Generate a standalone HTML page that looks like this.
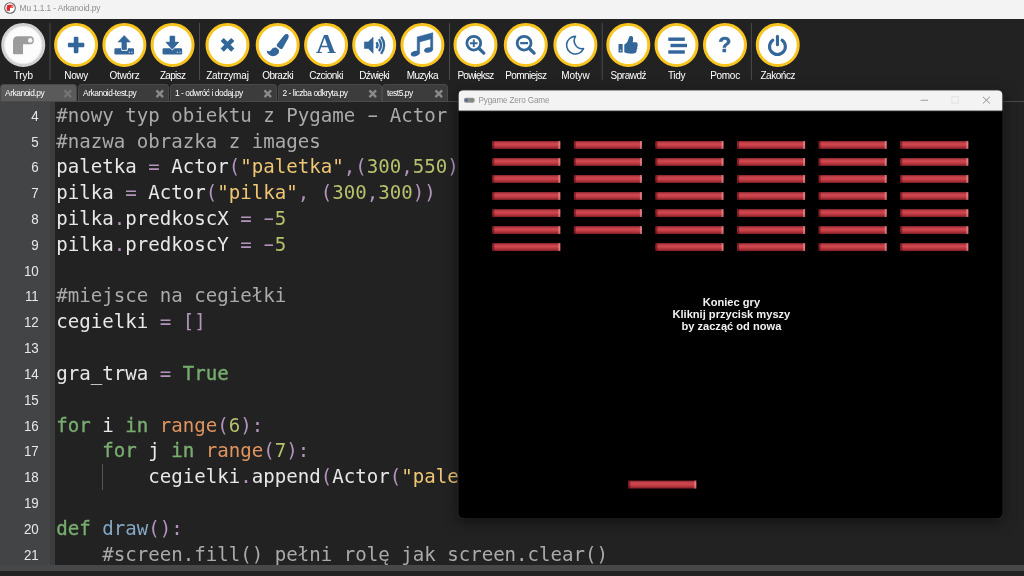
<!DOCTYPE html>
<html lang="pl">
<head>
<meta charset="utf-8">
<title>Mu 1.1.1 - Arkanoid.py</title>
<style>
*{margin:0;padding:0;box-sizing:border-box}
html,body{width:1024px;height:576px;overflow:hidden;background:#222;font-family:"Liberation Sans",sans-serif}
#app{position:relative;width:1024px;height:576px;overflow:hidden;background:#222;will-change:transform}
/* ---------- OS title bar ---------- */
#titlebar{position:absolute;left:0;top:0;width:1024px;height:19px;background:#f3f3f3}
#titlebar .ico{position:absolute;left:4px;top:1.8px;width:12px;height:12px}
#titlebar .ttl{position:absolute;left:19.6px;top:3.4px;font-size:8.3px;line-height:11px;color:#8c8c8c;white-space:nowrap;letter-spacing:-0.1px}
/* ---------- toolbar ---------- */
#toolbar{position:absolute;left:0;top:19px;width:1024px;height:65px;background:#222}
.sep{position:absolute;left:0;top:4px;width:1px;height:57px;background:#4a4a4a}
.btn{position:absolute;left:0;top:4px;width:44px;height:44px;margin-left:-22px;border-radius:50%;background:#fff;border:3px solid #fac41f}
.btn.mode{border-color:#d2d2d2;background:#fcfcfc;box-shadow:inset 0 0 0 1px #ececec}
.btn svg{position:absolute;left:-3px;top:-3px;width:44px;height:44px}
.lbl{position:absolute;top:50.5px;width:80px;margin-left:-40px;text-align:center;color:#fff;font-size:10px;line-height:12px;white-space:nowrap}
/* ---------- tabs ---------- */
#tabs{position:absolute;left:0;top:84px;width:1024px;height:18px;background:#222;border-bottom:1px solid #4a4a4a}
.tab{position:absolute;top:0;height:17px;background:#3c3c3c;border-radius:4px 4px 0 0;color:#fff;font-size:8.4px;line-height:17px;padding-left:4px;white-space:nowrap;letter-spacing:-0.45px;border:1px solid #4a4a4a;border-bottom:none}
.tab.act{background:#5a5a5a}
.tab.act .x path{stroke:#747474}
.tab .x{position:absolute;right:3.5px;top:3.5px;width:9.5px;height:9.5px}
/* ---------- editor ---------- */
#gutter{position:absolute;left:0;top:102px;width:56px;height:463px;background:linear-gradient(to right,#424446 50.5px,#3c3d3f 50.5px,#3c3d3f 55px,#222 55px);z-index:2}
#code{position:absolute;left:54px;top:102px;width:970px;height:463px;background:#222;overflow:hidden}
.ln{position:absolute;left:0;width:38.3px;text-align:right;color:#e8e8e8;font-size:15px;line-height:26px;height:26px;letter-spacing:-0.3px;transform:scaleX(0.89);transform-origin:100% 50%}
.cl{position:absolute;left:2.3px;white-space:pre;color:#e8e8e8;font-family:"DejaVu Sans Mono","Liberation Mono",monospace;font-size:19.1px;line-height:26px;height:26px}
.w{display:inline-block;transform:scaleX(1.75)}
.c{color:#a9aba9}.k{color:#78ad6f;-webkit-text-stroke:0.35px #78ad6f}.s{color:#f0c674}.n{color:#b8c06c}.o{color:#b294bc}.b{color:#e0955f}.f{color:#85a8c6}
#guide{position:absolute;left:48px;top:361px;width:1px;height:26px;background:#555}
#bottom1{position:absolute;left:0;top:565px;width:1024px;height:6px;background:#46484a}
#bottom2{position:absolute;left:0;top:571px;width:1024px;height:5px;background:#222}
/* ---------- pygame window ---------- */
#win{position:absolute;left:458px;top:90px;width:543.5px;height:427.6px;transform:translate(0.5px,0.15px);background:#000;border-radius:5px;overflow:hidden;box-shadow:0 3px 14px rgba(0,0,0,.5),0 0 0 1px rgba(64,64,64,.55)}
#wtitle{position:absolute;left:0;top:0;width:544px;height:20px;background:#f3f3f3;box-shadow:0 1px 0 rgba(243,243,243,.58)}
#wtitle .t{position:absolute;left:20px;top:4.8px;font-size:8.15px;line-height:12px;color:#939393;white-space:nowrap;letter-spacing:-0.15px}
#wtitle svg{position:absolute}
.brick{position:absolute;left:0;top:0;width:68.4px;height:7.6px;background:linear-gradient(to bottom,#84242a 0%,#c4424a 24%,#d0464e 45%,#b0333b 76%,#7a1d23 100%)}
.brick:before{content:"";position:absolute;left:0;top:0;width:2px;height:7.6px;background:rgba(90,10,14,.55)}
.brick:after{content:"";position:absolute;right:0;top:0;width:2px;height:7.6px;background:rgba(255,190,190,.45)}
#msg{position:absolute;left:132.9px;top:207.2px;width:280px;text-align:center;color:#f2f2f2;font-weight:bold;font-size:11.1px;line-height:11.8px}
</style>
</head>
<body>
<div id="app">

<div id="titlebar">
  <svg class="ico" viewBox="0 0 24 24"><circle cx="12" cy="12" r="10.6" fill="#fff" stroke="#666" stroke-width="2.2"/><path d="M5.5 17.5V10Q5.5 5.5 10 5.5H16.5Q19 5.5 19 8.5Q19 11.5 16.5 11.5H12V17.5Z" fill="#e0262c"/><circle cx="16.3" cy="8.4" r="1.3" fill="#fff"/></svg>
  <div class="ttl">Mu 1.1.1 - Arkanoid.py</div>
</div>

<div id="toolbar">
<div class="sep" style="transform:translateX(49.5px)"></div>
<div class="sep" style="transform:translateX(199.0px)"></div>
<div class="sep" style="transform:translateX(449.0px)"></div>
<div class="sep" style="transform:translateX(601.75px)"></div>
<div class="sep" style="transform:translateX(750.9px)"></div>
<div class="btn mode" style="transform:translateX(23.25px)"><svg viewBox="0 0 44 44"><path d="M11.8 30.2V18Q11.8 13.2 16.8 13.2H29Q32.6 13.2 32.6 17.2Q32.6 21.3 29 21.3H21.8V30.2Q21.8 31.2 20.8 31.2H12.8Q11.8 31.2 11.8 30.2Z" fill="#9c9c9c"/><circle cx="29" cy="17.4" r="2.3" fill="#f4f4f4"/></svg></div><div class="lbl" style="left:23.25px;letter-spacing:-0.10px"><span>Tryb</span></div>
<div class="btn" style="transform:translateX(76.1px)"><svg viewBox="0 0 44 44"><rect x="19.7" y="13.8" width="4.6" height="16.4" rx="1" fill="#336699"/><rect x="13.8" y="19.7" width="16.4" height="4.6" rx="1" fill="#336699"/></svg></div><div class="lbl" style="left:76.1px;letter-spacing:-0.34px"><span>Nowy</span></div>
<div class="btn" style="transform:translateX(124.4px)"><svg viewBox="0 0 44 44"><rect x="12" y="25.2" width="19.6" height="6.3" rx="1.2" fill="#336699"/><path d="M18.6 24.8H25.4V26.6Q25.4 28 24 28H20Q18.6 28 18.6 26.6Z" fill="#fff"/><path d="M21.8 12.4L28 19H24.1V26.3Q24.1 26.8 23.6 26.8H20Q19.5 26.8 19.5 26.3V19H15.6Z" fill="#336699" stroke="#336699" stroke-width="0.6" stroke-linejoin="round"/><circle cx="26.9" cy="29.3" r="0.75" fill="#b9cbe0"/><circle cx="29.5" cy="29.3" r="0.75" fill="#b9cbe0"/></svg></div><div class="lbl" style="left:124.4px;letter-spacing:-0.29px"><span>Otwórz</span></div>
<div class="btn" style="transform:translateX(172.55px)"><svg viewBox="0 0 44 44"><rect x="12" y="25.2" width="19.6" height="6.3" rx="1.2" fill="#336699"/><path d="M21.8 26.2L28.2 19.2H24.2V13.6Q24.2 13.1 23.7 13.1H19.9Q19.4 13.1 19.4 13.6V19.2H15.4Z" fill="#336699" stroke="#fff" stroke-width="2" stroke-linejoin="round" paint-order="stroke"/><path d="M21.8 26.2L28.2 19.2H24.2V13.6Q24.2 13.1 23.7 13.1H19.9Q19.4 13.1 19.4 13.6V19.2H15.4Z" fill="#336699" stroke="#336699" stroke-width="0.6" stroke-linejoin="round"/><circle cx="26.9" cy="29.3" r="0.75" fill="#b9cbe0"/><circle cx="29.5" cy="29.3" r="0.75" fill="#b9cbe0"/></svg></div><div class="lbl" style="left:172.55px;letter-spacing:-0.69px"><span>Zapisz</span></div>
<div class="btn" style="transform:translateX(227.5px)"><svg viewBox="0 0 44 44"><path d="M16.7 16.5L27.3 27.1M27.3 16.5L16.7 27.1" stroke="#336699" stroke-width="4.5" fill="none"/></svg></div><div class="lbl" style="left:227.5px;letter-spacing:-0.13px"><span>Zatrzymaj</span></div>
<div class="btn" style="transform:translateX(277.7px)"><svg viewBox="0 0 44 44"><path d="M31.7 11.1Q33.9 12.2 32.5 15.4L26.8 25.4Q25.8 26.6 24.4 25.8L21.6 23.5Q20.5 22.4 21.4 21L28.4 12.2Q30 10.4 31.7 11.1Z" fill="#336699"/><path d="M20.6 24.6Q17 24 15.6 26.8Q14.6 29.2 11 27.6Q11.4 31.4 15 32.8Q18.6 33.8 21.4 31.8Q23.8 29.8 23.4 27.2Z" fill="#336699"/></svg></div><div class="lbl" style="left:277.7px;letter-spacing:-0.49px"><span>Obrazki</span></div>
<div class="btn" style="transform:translateX(326.1px)"><svg viewBox="0 0 44 44"><text x="21.9" y="30.1" font-family="Liberation Serif,serif" font-weight="bold" font-size="27.5" text-anchor="middle" fill="#336699">A</text></svg></div><div class="lbl" style="left:326.1px;letter-spacing:-0.53px"><span>Czcionki</span></div>
<div class="btn" style="transform:translateX(374.2px)"><svg viewBox="0 0 44 44"><path d="M12.2 18.9H16L20.9 14.3V30.3L16 25.4H12.2Z" fill="#336699" stroke="#336699" stroke-width="0.6" stroke-linejoin="round"/><path d="M24.3 19.2Q26.5 22.2 24.3 25.2M26.8 16.2Q30.8 22.2 26.8 28.2M28.9 13.6Q35 22.2 28.9 30.8" stroke="#336699" stroke-width="2.3" fill="none"/></svg></div><div class="lbl" style="left:374.2px;letter-spacing:-0.64px"><span>Dźwięki</span></div>
<div class="btn" style="transform:translateX(422.4px)"><svg viewBox="0 0 44 44"><path d="M16.8 13.9L32.4 9.7V27H30.2V15.9L19.2 19V30.6H16.8Z" fill="#336699" stroke="#336699" stroke-width="0.5" stroke-linejoin="round"/><ellipse cx="14.7" cy="30.6" rx="4.4" ry="2.7" transform="rotate(-14 14.7 30.6)" fill="#336699"/><ellipse cx="28" cy="27" rx="4.4" ry="2.6" transform="rotate(-14 28 27)" fill="#336699"/></svg></div><div class="lbl" style="left:422.4px;letter-spacing:-0.52px"><span>Muzyka</span></div>
<div class="btn" style="transform:translateX(475.5px)"><svg viewBox="0 0 44 44"><circle cx="20.3" cy="20.2" r="6.9" stroke="#336699" stroke-width="2.8" fill="none"/><path d="M25.8 25.7L30.3 30.1" stroke="#336699" stroke-width="3.3" stroke-linecap="round"/><path d="M20.3 16.4V24M16.5 20.2H24.1" stroke="#336699" stroke-width="1.9"/></svg></div><div class="lbl" style="left:475.5px;letter-spacing:-0.77px"><span>Powiększ</span></div>
<div class="btn" style="transform:translateX(525.8px)"><svg viewBox="0 0 44 44"><circle cx="20.3" cy="20.2" r="6.9" stroke="#336699" stroke-width="2.8" fill="none"/><path d="M25.8 25.7L30.3 30.1" stroke="#336699" stroke-width="3.3" stroke-linecap="round"/><path d="M16.4 20.2H24.2" stroke="#336699" stroke-width="2.3"/></svg></div><div class="lbl" style="left:525.8px;letter-spacing:-0.54px"><span>Pomniejsz</span></div>
<div class="btn" style="transform:translateX(575.4px)"><svg viewBox="0 0 44 44"><path d="M22.1 13.4A8.8 8.8 0 1 0 30.1 25.6A8 8 0 0 1 22.1 13.4Z" stroke="#336699" stroke-width="1.6" fill="none" stroke-linejoin="round"/></svg></div><div class="lbl" style="left:575.4px;letter-spacing:-0.14px"><span>Motyw</span></div>
<div class="btn" style="transform:translateX(628.3px)"><svg viewBox="0 0 44 44"><rect x="12.2" y="20.9" width="4.2" height="8.6" rx="0.5" fill="#336699"/><circle cx="14.3" cy="27.4" r="0.8" fill="#b9cbe0"/><path d="M18 21.6Q21.6 19.6 22.4 15Q22.8 12.9 24.8 13.1Q27.2 13.4 26.8 16.6L26.4 19.2H30Q31.8 19.6 31.2 21.4Q32 22.8 30.9 24Q31.5 25.6 30.3 26.8Q30.7 28.8 29.2 30Q27 30.8 23.6 30.6Q20.4 30.4 18 29.2Z" fill="#336699"/></svg></div><div class="lbl" style="left:628.3px;letter-spacing:-0.47px"><span>Sprawdź</span></div>
<div class="btn" style="transform:translateX(676.5px)"><svg viewBox="0 0 44 44"><rect x="13.8" y="14.5" width="16.5" height="3.4" fill="#336699"/><rect x="16" y="20.8" width="16.5" height="3.4" fill="#336699"/><rect x="13.8" y="27.3" width="16.5" height="3.4" fill="#336699"/></svg></div><div class="lbl" style="left:676.5px;letter-spacing:-0.34px"><span>Tidy</span></div>
<div class="btn" style="transform:translateX(725.0px)"><svg viewBox="0 0 44 44"><text x="21.8" y="29.2" font-family="Liberation Sans,sans-serif" font-weight="bold" font-size="21.5" text-anchor="middle" fill="#336699" stroke="#336699" stroke-width="0.5">?</text></svg></div><div class="lbl" style="left:725.0px;letter-spacing:-0.28px"><span>Pomoc</span></div>
<div class="btn" style="transform:translateX(777.75px)"><svg viewBox="0 0 44 44"><path d="M17 17.2A7.9 7.9 0 1 0 26.4 17.2" stroke="#336699" stroke-width="3.1" fill="none" stroke-linecap="round"/><path d="M21.7 13.3V21.8" stroke="#336699" stroke-width="3.1" stroke-linecap="round"/></svg></div><div class="lbl" style="left:777.75px;letter-spacing:-0.45px"><span>Zakończ</span></div>
</div>

<div id="tabs">
<div class="tab act" style="left:0px;width:77px">Arkanoid.py<svg class="x" viewBox="0 0 10 10"><path d="M1.5 1.5L8.5 8.5M8.5 1.5L1.5 8.5" stroke="#8a8a8a" stroke-width="2.5"/></svg></div>
<div class="tab" style="left:78px;width:91px">Arkanoid-test.py<svg class="x" viewBox="0 0 10 10"><path d="M1.5 1.5L8.5 8.5M8.5 1.5L1.5 8.5" stroke="#8a8a8a" stroke-width="2.5"/></svg></div>
<div class="tab" style="left:170px;width:107px">1 - odwróć i dodaj.py<svg class="x" viewBox="0 0 10 10"><path d="M1.5 1.5L8.5 8.5M8.5 1.5L1.5 8.5" stroke="#8a8a8a" stroke-width="2.5"/></svg></div>
<div class="tab" style="left:277.5px;width:104px">2 - liczba odkryta.py<svg class="x" viewBox="0 0 10 10"><path d="M1.5 1.5L8.5 8.5M8.5 1.5L1.5 8.5" stroke="#8a8a8a" stroke-width="2.5"/></svg></div>
<div class="tab" style="left:382px;width:66px">test5.py<svg class="x" viewBox="0 0 10 10"><path d="M1.5 1.5L8.5 8.5M8.5 1.5L1.5 8.5" stroke="#8a8a8a" stroke-width="2.5"/></svg></div>
</div>

<div id="gutter">
<div class="ln" style="top:0.80px">4</div>
<div class="ln" style="top:26.61px">5</div>
<div class="ln" style="top:52.42px">6</div>
<div class="ln" style="top:78.23px">7</div>
<div class="ln" style="top:104.04px">8</div>
<div class="ln" style="top:129.85px">9</div>
<div class="ln" style="top:155.66px">10</div>
<div class="ln" style="top:181.47px">11</div>
<div class="ln" style="top:207.28px">12</div>
<div class="ln" style="top:233.09px">13</div>
<div class="ln" style="top:258.90px">14</div>
<div class="ln" style="top:284.71px">15</div>
<div class="ln" style="top:310.52px">16</div>
<div class="ln" style="top:336.33px">17</div>
<div class="ln" style="top:362.14px">18</div>
<div class="ln" style="top:387.95px">19</div>
<div class="ln" style="top:413.76px">20</div>
<div class="ln" style="top:439.57px">21</div>
</div>
<div id="code">
<div class="cl" style="top:0.80px"><span class="c">#nowy typ obiektu z Pygame </span><span class="c w">-</span><span class="c"> Actor</span></div>
<div class="cl" style="top:26.61px"><span class="c">#nazwa obrazka z images</span></div>
<div class="cl" style="top:52.42px">paletka <span class="o">=</span> Actor<span class="o">(</span><span class="s">"paletka"</span><span class="o">,(</span><span class="n">300</span><span class="o">,</span><span class="n">550</span><span class="o">))</span></div>
<div class="cl" style="top:78.23px">pilka <span class="o">=</span> Actor<span class="o">(</span><span class="s">"pilka"</span><span class="o">,</span> <span class="o">(</span><span class="n">300</span><span class="o">,</span><span class="n">300</span><span class="o">))</span></div>
<div class="cl" style="top:104.04px">pilka<span class="o">.</span>predkoscX <span class="o">=</span> <span class="o w">-</span><span class="n">5</span></div>
<div class="cl" style="top:129.85px">pilka<span class="o">.</span>predkoscY <span class="o">=</span> <span class="o w">-</span><span class="n">5</span></div>
<div class="cl" style="top:181.47px"><span class="c">#miejsce na cegiełki</span></div>
<div class="cl" style="top:207.28px">cegielki <span class="o">=</span> <span class="o">[]</span></div>
<div class="cl" style="top:258.90px">gra_trwa <span class="o">=</span> <span class="k">True</span></div>
<div class="cl" style="top:310.52px"><span class="k">for</span> i <span class="k">in</span> <span class="b">range</span><span class="o">(</span><span class="n">6</span><span class="o">):</span></div>
<div class="cl" style="top:336.33px">    <span class="k">for</span> j <span class="k">in</span> <span class="b">range</span><span class="o">(</span><span class="n">7</span><span class="o">):</span></div>
<div class="cl" style="top:362.14px">        cegielki<span class="o">.</span>append<span class="o">(</span>Actor<span class="o">(</span><span class="s">"paletka"</span><span class="o">,</span></div>
<div class="cl" style="top:413.76px"><span class="k">def</span> <span class="f">draw</span><span class="o">():</span></div>
<div class="cl" style="top:439.57px">    <span class="c">#screen.fill() pełni rolę jak screen.clear()</span></div>
<div id="guide" style="top:362.14px"></div>
</div>
<div id="bottom1"></div>
<div id="bottom2"></div>

<div id="win">
  <div id="wtitle">
    <svg style="left:5px;top:5.6px;width:11.6px;height:8.7px" viewBox="0 0 20 16"><rect x="0" y="3" width="20" height="9" rx="4" fill="#8d9096"/><circle cx="5" cy="7.5" r="3" fill="#5b6d8c"/><circle cx="14.5" cy="7.5" r="2.6" fill="#7b8a5f"/></svg>
    <div class="t">Pygame Zero Game</div>
    <svg style="left:459px;top:4px;width:76px;height:13px" viewBox="0 0 76 13"><path d="M3 6.1H10.6" stroke="#9c9c9c" stroke-width="1" fill="none"/><rect x="34.4" y="2.6" width="6.4" height="6.4" stroke="#e0e0e0" stroke-width="1" fill="none"/><path d="M65.4 2.6L72.4 9.4M72.4 2.6L65.4 9.4" stroke="#858585" stroke-width="0.9" fill="none"/></svg>
  </div>
<div class="brick" style="transform:translate(33.8px,50.8px)"></div>
<div class="brick" style="transform:translate(33.8px,67.8px)"></div>
<div class="brick" style="transform:translate(33.8px,84.8px)"></div>
<div class="brick" style="transform:translate(33.8px,101.8px)"></div>
<div class="brick" style="transform:translate(33.8px,118.9px)"></div>
<div class="brick" style="transform:translate(33.8px,135.9px)"></div>
<div class="brick" style="transform:translate(33.8px,152.9px)"></div>
<div class="brick" style="transform:translate(115.4px,50.8px)"></div>
<div class="brick" style="transform:translate(115.4px,67.8px)"></div>
<div class="brick" style="transform:translate(115.4px,84.8px)"></div>
<div class="brick" style="transform:translate(115.4px,101.8px)"></div>
<div class="brick" style="transform:translate(115.4px,118.9px)"></div>
<div class="brick" style="transform:translate(115.4px,135.9px)"></div>
<div class="brick" style="transform:translate(197.0px,50.8px)"></div>
<div class="brick" style="transform:translate(197.0px,67.8px)"></div>
<div class="brick" style="transform:translate(197.0px,84.8px)"></div>
<div class="brick" style="transform:translate(197.0px,101.8px)"></div>
<div class="brick" style="transform:translate(197.0px,118.9px)"></div>
<div class="brick" style="transform:translate(197.0px,135.9px)"></div>
<div class="brick" style="transform:translate(197.0px,152.9px)"></div>
<div class="brick" style="transform:translate(278.6px,50.8px)"></div>
<div class="brick" style="transform:translate(278.6px,67.8px)"></div>
<div class="brick" style="transform:translate(278.6px,84.8px)"></div>
<div class="brick" style="transform:translate(278.6px,101.8px)"></div>
<div class="brick" style="transform:translate(278.6px,118.9px)"></div>
<div class="brick" style="transform:translate(278.6px,135.9px)"></div>
<div class="brick" style="transform:translate(278.6px,152.9px)"></div>
<div class="brick" style="transform:translate(360.2px,50.8px)"></div>
<div class="brick" style="transform:translate(360.2px,67.8px)"></div>
<div class="brick" style="transform:translate(360.2px,84.8px)"></div>
<div class="brick" style="transform:translate(360.2px,101.8px)"></div>
<div class="brick" style="transform:translate(360.2px,118.9px)"></div>
<div class="brick" style="transform:translate(360.2px,135.9px)"></div>
<div class="brick" style="transform:translate(360.2px,152.9px)"></div>
<div class="brick" style="transform:translate(441.8px,50.8px)"></div>
<div class="brick" style="transform:translate(441.8px,67.8px)"></div>
<div class="brick" style="transform:translate(441.8px,84.8px)"></div>
<div class="brick" style="transform:translate(441.8px,101.8px)"></div>
<div class="brick" style="transform:translate(441.8px,118.9px)"></div>
<div class="brick" style="transform:translate(441.8px,135.9px)"></div>
<div class="brick" style="transform:translate(441.8px,152.9px)"></div>
  <div class="brick" style="transform:translate(169.8px,390.4px)"></div>
  <div id="msg">Koniec gry<br>Kliknij przycisk myszy<br>by zacząć od nowa</div>
</div>

</div>
</body>
</html>
